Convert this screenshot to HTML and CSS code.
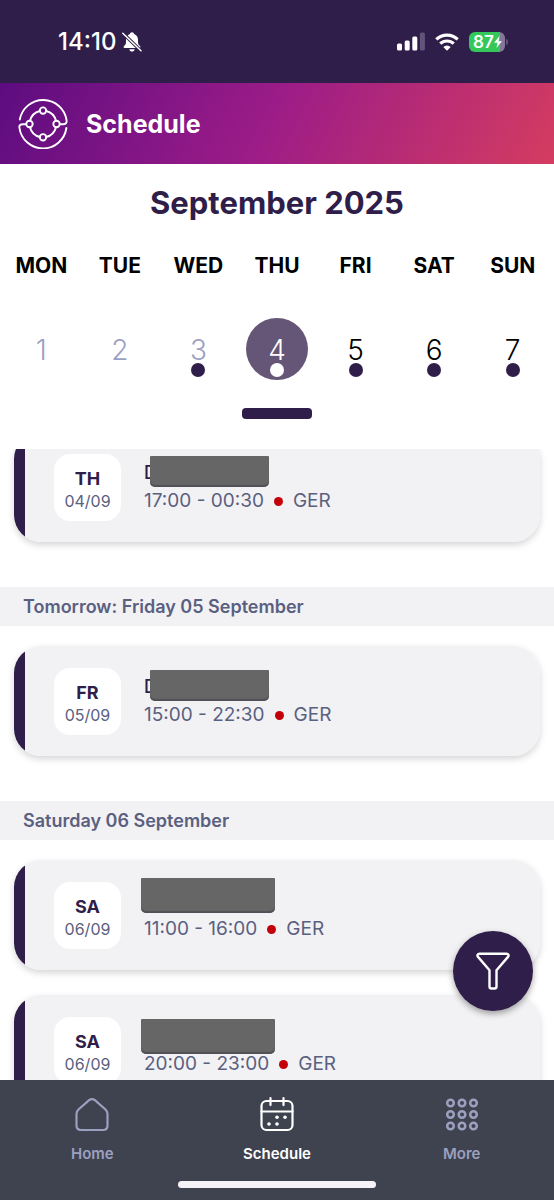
FILE: index.html
```html
<!DOCTYPE html>
<html lang="en">
<head>
<meta charset="utf-8">
<meta name="viewport" content="width=device-width, initial-scale=1">
<title>Schedule</title>
<link rel="stylesheet" href="styles.css">
</head>
<body>
<div class="app">
  <div class="status">
    <div class="status-left">
      <span class="clock">14:10</span>
      <svg class="bell" viewBox="0 0 20 20" aria-hidden="true">
        <path fill="#fff" d="M10 .3c-1.100 0-1.900.7-2.100 1.700C5.200 2.900 4 5 4 7.600v2.600c0 1.600-.6 2.500-1.700 3.500-1.200 1.100-.9 2.300.5 2.300h14.400c1.400 0 1.700-1.200.5-2.300-1.100-1-1.700-1.900-1.700-3.500V7.600c0-2.600-1.200-4.700-3.900-5.600C11.900 1 11.100.3 10 .3zM7.300 17.200h5.400c-.3 1.500-1.300 2.400-2.700 2.400s-2.400-.9-2.700-2.400z"/>
        <path d="M.8 1.200 19 18.800" stroke="#2f1e49" stroke-width="3.400"/>
        <path d="M.8 1.200 19 18.800" stroke="#fff" stroke-width="1.500" stroke-linecap="round"/>
      </svg>
    </div>
    <div class="status-right">
      <svg class="signal" viewBox="0 0 28 19" aria-hidden="true">
        <rect x="0" y="11.500" width="5" height="7" rx="1.500" fill="#fff"/>
        <rect x="7.700" y="8.500" width="5" height="10" rx="1.500" fill="#fff"/>
        <rect x="15.300" y="4.500" width="5" height="14" rx="1.500" fill="#fff"/>
        <rect x="22.900" y=".5" width="5" height="18" rx="1.500" fill="#62537a"/>
      </svg>
      <svg class="wifi" viewBox="0 0 24 18" aria-hidden="true">
        <g fill="none" stroke="#fff" stroke-width="3.200">
          <path d="M1.300 6.400a15.300 15.300 0 0 1 21.400 0"/>
          <path d="M5.300 10.700a9.600 9.600 0 0 1 13.400 0"/>
        </g>
        <path fill="#fff" d="M12 17.800 8.300 14.100a5.300 5.300 0 0 1 7.400 0z"/>
      </svg>
      <div class="battery">
        <span>87</span>
        <svg class="bolt" viewBox="0 0 8 12" aria-hidden="true"><path fill="#fff" d="M5.600 0 0 6.700h3.500L2.400 12 8 5.200H4.500z"/></svg>
      </div>
    </div>
  </div>

  <header class="header">
    <svg class="logo" viewBox="0 0 50 50" aria-hidden="true">
      <g fill="none" stroke="#fff" stroke-width="1.900" stroke-linecap="round">
        <path d="M1.800 20.500A23.700 23.700 0 0 1 48.600 21.500C49 24 47.500 25.200 45 25.200H42"/>
        <path d="M48.400 29A23.700 23.700 0 0 1 1.400 28.500C1 26 2.500 25.200 5 25.200H8"/>
        <circle cx="25" cy="11.600" r="3.200"/><circle cx="25" cy="38.300" r="3.200"/>
        <circle cx="11.500" cy="25" r="3.200"/><circle cx="38.500" cy="25" r="3.200"/>
        <path d="M28.200 12a13.500 13.500 0 0 1 9.800 9.800M38 28.200a13.500 13.500 0 0 1-9.800 9.800M21.800 38a13.500 13.500 0 0 1-9.800-9.800M12 21.800a13.500 13.500 0 0 1 9.800-9.800"/>
      </g>
    </svg>
    <h1 class="title">Schedule</h1>
  </header>

  <section class="calendar">
    <h2 class="month">September 2025</h2>
    <div class="week names">
      <span>MON</span><span>TUE</span><span>WED</span><span>THU</span><span>FRI</span><span>SAT</span><span>SUN</span>
    </div>
    <div class="week days">
      <button class="day past">1</button>
      <button class="day past">2</button>
      <button class="day past event">3</button>
      <button class="day event selected">4</button>
      <button class="day event">5</button>
      <button class="day event">6</button>
      <button class="day event">7</button>
    </div>
    <button class="handle" aria-label="Expand calendar"></button>
  </section>

  <main class="list">
    <div class="feed">
      <article class="card">
        <div class="chip"><b>TH</b><span>04/09</span></div>
        <div class="info">
          <div class="name">D<i class="mask"></i></div>
          <div class="meta"><span>17:00 - 00:30</span><i class="dot"></i><span>GER</span></div>
        </div>
      </article>
      <h3 class="section">Tomorrow: Friday 05 September</h3>
      <article class="card">
        <div class="chip"><b>FR</b><span>05/09</span></div>
        <div class="info">
          <div class="name">D<i class="mask"></i></div>
          <div class="meta"><span>15:00 - 22:30</span><i class="dot"></i><span>GER</span></div>
        </div>
      </article>
      <h3 class="section">Saturday 06 September</h3>
      <article class="card">
        <div class="chip"><b>SA</b><span>06/09</span></div>
        <div class="info">
          <div class="name"><i class="mask wide high"></i></div>
          <div class="meta"><span>11:00 - 16:00</span><i class="dot"></i><span>GER</span></div>
        </div>
      </article>
      <article class="card">
        <div class="chip"><b>SA</b><span>06/09</span></div>
        <div class="info">
          <div class="name"><i class="mask wide"></i></div>
          <div class="meta"><span>20:00 - 23:00</span><i class="dot"></i><span>GER</span></div>
        </div>
      </article>
    </div>
    <button class="fab" aria-label="Filter">
      <svg viewBox="0 0 34 38" aria-hidden="true"><path fill="none" stroke="#fff" stroke-width="2.400" stroke-linejoin="round" d="M3.500 1.700H30.500C32.400 1.700 33.200 3.400 32 4.900L20.500 18.200V34.500Q20.500 36.500 18.500 36.500H15.500Q13.500 36.500 13.500 34.500V18.200L2 4.900C.8 3.400 1.600 1.700 3.500 1.700z"/></svg>
    </button>
  </main>

  <nav class="nav">
    <div class="tabs">
      <a class="tab" href="#home">
        <svg viewBox="0 0 36 36" aria-hidden="true"><path fill="none" stroke="#9ca0bf" stroke-width="2.200" stroke-linejoin="round" d="M15.100 3.200Q18 1 20.900 3.200L31.500 12.500Q33.500 14.300 33.500 17V28.500Q33.500 33 29 33H7Q2.500 33 2.500 28.500V17Q2.500 14.300 4.500 12.500z"/></svg>
        <span>Home</span>
      </a>
      <a class="tab active" href="#schedule" aria-current="page">
        <svg viewBox="0 0 36 36" aria-hidden="true">
          <g fill="none" stroke="#fff" stroke-width="2.200" stroke-linecap="round"><rect x="2.500" y="4" width="31" height="29" rx="5"/><path d="M2.500 14.500h31M11.500 1.100v7M24.500 1.100v7"/></g>
          <g fill="#fff"><circle cx="18" cy="20.300" r="1.800"/><circle cx="26" cy="20.300" r="1.800"/><circle cx="10" cy="27" r="1.800"/><circle cx="18" cy="27" r="1.800"/></g>
        </svg>
        <span>Schedule</span>
      </a>
      <a class="tab" href="#more">
        <svg viewBox="0 0 36 36" aria-hidden="true"><g fill="none" stroke="#9ca0bf" stroke-width="2.500"><circle cx="6.500" cy="6" r="3.300"/><circle cx="18" cy="6" r="3.300"/><circle cx="29.500" cy="6" r="3.300"/><circle cx="6.500" cy="17.500" r="3.300"/><circle cx="18" cy="17.500" r="3.300"/><circle cx="29.500" cy="17.500" r="3.300"/><circle cx="6.500" cy="29" r="3.300"/><circle cx="18" cy="29" r="3.300"/><circle cx="29.500" cy="29" r="3.300"/></g></svg>
        <span>More</span>
      </a>
    </div>
    <div class="home-bar"></div>
  </nav>
</div>
</body>
</html>
```
FILE: styles.css
```css
* { box-sizing: border-box; }
body { margin: 0; background: #fff; font-family: Inter, "Liberation Sans", sans-serif; }
h1, h2, h3 { margin: 0; }
button { border: 0; padding: 0; background: none; font: inherit; color: inherit; }
svg { display: block; }
.app { display: flex; flex-direction: column; height: 100vh; }

.status { display: flex; justify-content: space-between; align-items: center; height: 83px; padding: 0 47px 0 58px; background: #2f1e49; color: #fff; }
.status-left { display: flex; align-items: center; gap: 6px; }
.clock { font-size: 24px; line-height: 28px; font-weight: 500; }
.bell { width: 20px; height: 20px; }
.status-right { display: flex; align-items: center; gap: 10px; }
.signal { width: 28px; height: 19px; }
.wifi { width: 24px; height: 18px; }
.battery { position: relative; display: flex; align-items: center; width: 36px; height: 20px; margin-right: 2px; padding-left: 4px; border-radius: 6px; background: linear-gradient(90deg, #34c759 31px, #84779a 31px); font-size: 17px; line-height: 20px; font-weight: 600; }
.battery::after { content: ""; position: absolute; left: 37px; top: 7px; width: 2px; height: 6px; border-radius: 0 2px 2px 0; background: #62537a; }
.bolt { width: 8px; height: 12px; }

.header { display: flex; align-items: center; gap: 18px; height: 81px; padding: 0 18px; background: linear-gradient(117deg, #5c0c80 0%, #9c1c88 48%, #d43c60 100%); color: #fff; }
.logo { width: 50px; height: 50px; }
.title { font-size: 25px; line-height: 32px; font-weight: 700; }

.calendar { display: flex; flex-direction: column; align-items: center; padding: 19px 2px 30px; }
.month { font-size: 31px; line-height: 40px; font-weight: 700; color: #2f1e49; }
.week { display: grid; grid-template-columns: repeat(7, 1fr); justify-items: center; width: 100%; }
.names { margin-top: 31px; font-size: 21px; line-height: 24px; font-weight: 700; color: #000; }
.days { margin-top: 40px; }
.day { position: relative; width: 62px; height: 62px; padding-top: 2px; border-radius: 50%; font-size: 28px; line-height: 60px; font-weight: 300; color: #000; }
.past { color: #9ca0c3; }
.event::after { content: ""; position: absolute; left: 24px; top: 45px; width: 14px; height: 14px; border-radius: 50%; background: #2f1e49; }
.selected { background: #655677; color: #fff; }
.selected::after { background: #fff; }
.handle { width: 70px; height: 11px; margin-top: 28px; border-radius: 4px; background: #2f1e49; }

.list { position: relative; flex: 1; min-height: 0; overflow: hidden; }
/* Feed is scrolled partly past its first card */
.feed { display: flex; flex-direction: column; margin-top: -17px; }
.card { position: relative; display: flex; flex: none; align-items: center; gap: 23px; height: 110px; margin: 0 14px 25px; padding-left: 40px; border-radius: 27px; background: linear-gradient(90deg, #2f1e49 11px, #f2f2f4 11px); box-shadow: 0 3px 7px rgba(0, 0, 0, .17); }
.section { margin: 20px 0; padding: 0 23px; background: #f2f2f5; font-size: 18px; line-height: 39px; font-weight: 600; color: #5a6080; }
.chip { display: flex; flex-direction: column; align-items: center; justify-content: center; width: 67px; height: 67px; padding-top: 5px; border-radius: 16px; background: #fff; font-size: 16px; line-height: 22px; color: #5a6080; }
.chip b { font-size: 18px; color: #2f1e49; }
.info { position: relative; font-size: 19px; line-height: 28px; color: #5a6080; }
.name { height: 28px; font-size: 18px; font-weight: 500; color: #2f1e49; }
.mask { position: absolute; left: 6px; top: -3px; width: 119px; height: 31px; border-radius: 1px 1px 5px 5px; background: #666; box-shadow: inset 0 -2px 1px #505058; }
.wide { left: -3px; width: 134px; height: 35px; }
.high { top: -9px; }
.meta { display: flex; align-items: center; }
.dot { width: 9px; height: 9px; margin: 0 10px; border-radius: 50%; background: #c30008; }

.fab { position: absolute; right: 21px; bottom: 69px; display: grid; place-items: center; width: 80px; height: 80px; border-radius: 50%; background: #2f1e49; box-shadow: 0 3px 6px rgba(0, 0, 0, .35); }
.fab svg { width: 34px; height: 38px; }

.nav { display: flex; flex-direction: column; align-items: center; height: 120px; padding-top: 17px; background: #3e434f; }
.tabs { display: grid; grid-template-columns: repeat(3, 1fr); width: 100%; }
.tab { display: flex; flex-direction: column; align-items: center; gap: 11px; font-size: 15px; line-height: 20px; font-weight: 600; color: #9ca0bf; text-decoration: none; }
.tab svg { width: 36px; height: 36px; }
.active { color: #fff; }
.home-bar { width: 198px; height: 7px; margin-top: 17px; border-radius: 4px; background: #f6f3f8; }
```
